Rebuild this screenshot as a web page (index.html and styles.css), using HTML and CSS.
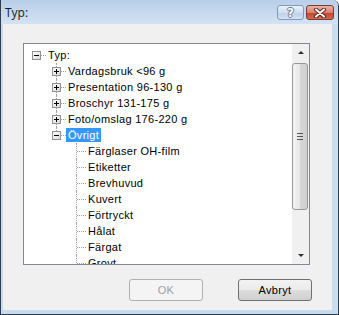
FILE: index.html
```html
<!DOCTYPE html>
<html lang="sv">
<head>
  <meta charset="UTF-8">
  <title>Typ:</title>
  <link rel="stylesheet" href="styles.css">
</head>
<body>
  <div class="window">
    <div class="titlebar">
      <span class="title">Typ:</span>
      <div class="caption-buttons">
        <span class="cap help">?</span>
        <span class="cap close">
          <svg width="14" height="10" viewBox="0 0 14 10">
            <path d="M3 1.5l8 7M11 1.5l-8 7" stroke="#5a2620" stroke-width="4" stroke-linecap="round"/>
            <path d="M3 1.5l8 7M11 1.5l-8 7" stroke="#fff" stroke-width="2" stroke-linecap="round"/>
          </svg>
        </span>
      </div>
    </div>

    <div class="client">
      <div class="treebox">
        <div class="tree">
          <div class="row"><span class="cell root"><i class="box minus"></i></span><span class="label">Typ:</span></div>
          <div class="row"><span class="cell"></span><span class="cell tee"><i class="box plus"></i></span><span class="label">Vardagsbruk &lt;96 g</span></div>
          <div class="row"><span class="cell"></span><span class="cell tee"><i class="box plus"></i></span><span class="label">Presentation 96-130 g</span></div>
          <div class="row"><span class="cell"></span><span class="cell tee"><i class="box plus"></i></span><span class="label">Broschyr 131-175 g</span></div>
          <div class="row"><span class="cell"></span><span class="cell tee"><i class="box plus"></i></span><span class="label">Foto/omslag 176-220 g</span></div>
          <div class="row"><span class="cell"></span><span class="cell ell"><i class="box minus"></i></span><span class="label selected">Övrigt</span></div>
          <div class="row"><span class="cell"></span><span class="cell"></span><span class="cell tee"></span><span class="label">Färglaser OH-film</span></div>
          <div class="row"><span class="cell"></span><span class="cell"></span><span class="cell tee"></span><span class="label">Etiketter</span></div>
          <div class="row"><span class="cell"></span><span class="cell"></span><span class="cell tee"></span><span class="label">Brevhuvud</span></div>
          <div class="row"><span class="cell"></span><span class="cell"></span><span class="cell tee"></span><span class="label">Kuvert</span></div>
          <div class="row"><span class="cell"></span><span class="cell"></span><span class="cell tee"></span><span class="label">Förtryckt</span></div>
          <div class="row"><span class="cell"></span><span class="cell"></span><span class="cell tee"></span><span class="label">Hålat</span></div>
          <div class="row"><span class="cell"></span><span class="cell"></span><span class="cell tee"></span><span class="label">Färgat</span></div>
          <div class="row"><span class="cell"></span><span class="cell"></span><span class="cell tee"></span><span class="label">Grovt</span></div>
        </div>
        <div class="scrollbar">
          <div class="arrow up"></div>
          <div class="track">
            <div class="thumb"><span class="grip"></span></div>
          </div>
          <div class="arrow down"></div>
        </div>
      </div>

      <div class="buttons">
        <button type="button" disabled>OK</button>
        <button type="button" class="default">Avbryt</button>
      </div>
    </div>
  </div>
</body>
</html>
```

FILE: styles.css
```css
body {
  margin: 0;
  padding: 0;
  background-color: #ffffff;
  font-family: "Liberation Sans", Arial, sans-serif;
  font-size: 11px;
}

.window {
  width: 339px;
  height: 315px;
  box-sizing: border-box;
  display: flex;
  flex-direction: column;
  background-color: #c9dbef;
  border-left: 1px solid #2f3d4c;
  border-right: 1px solid #2f3d4c;
  border-bottom: 1px solid #2f3d4c;
  border-top-right-radius: 6px;
  overflow: hidden;
}

.titlebar {
  height: 24px;
  flex: none;
  display: flex;
  align-items: flex-start;
  background: linear-gradient(#b8cfe9, #d3e2f3);
}

.title {
  font-family: "Open Sans", sans-serif;
  font-size: 12px;
  color: #1b1b1b;
  padding: 4px 0 0 4px;
}

.caption-buttons {
  margin-left: auto;
  margin-right: 4px;
  padding-top: 5px;
  display: flex;
  gap: 2px;
}

.cap {
  width: 27px;
  height: 15px;
  box-sizing: border-box;
  border-radius: 3px;
  display: flex;
  align-items: center;
  justify-content: center;
}

.help {
  border: 1px solid #8199ba;
  background: linear-gradient(#eaf1fa, #d0def0 50%, #bcd0ea 51%, #d3e2f3);
  font-family: "DejaVu Sans", sans-serif;
  font-weight: bold;
  font-size: 12px;
  color: #ffffff;
  text-shadow: 1px 0 #6a7b92, -1px 0 #6a7b92, 0 1px #6a7b92, 0 -1px #6a7b92;
}

.close {
  width: 28px;
  border: 1px solid #7c3a31;
  background: linear-gradient(#eab1a6, #d9826f 50%, #c5432c 51%, #d2674f);
}

.client {
  flex: 1;
  margin: 0 6px 4px 2px;
  background-color: #f0f0f0;
  padding: 19px 0 0 20px;
  display: flex;
  flex-direction: column;
}

.treebox {
  width: 287px;
  height: 222px;
  box-sizing: border-box;
  border: 1px solid #828790;
  background-color: #ffffff;
  display: flex;
  overflow: hidden;
}

.tree {
  flex: 1;
  padding: 3px 0 0 2px;
  overflow: hidden;
}

.row {
  height: 16px;
  display: flex;
  align-items: center;
}

.cell {
  width: 20px;
  height: 16px;
  flex: none;
  position: relative;
}

.tee::before,
.ell::before {
  content: "";
  position: absolute;
  left: 10px;
  top: 0;
  height: 16px;
  border-left: 1px dotted #a0a0a0;
}

.ell::before {
  height: 8px;
}

.root::after,
.tee::after,
.ell::after {
  content: "";
  position: absolute;
  left: 11px;
  top: 8px;
  width: 9px;
  border-top: 1px dotted #a0a0a0;
}

.box {
  position: absolute;
  left: 6px;
  top: 4px;
  width: 9px;
  height: 9px;
  box-sizing: border-box;
  border: 1px solid #919191;
  background: linear-gradient(135deg, #ffffff, #d9d9d9);
  z-index: 1;
}

.box::before {
  content: "";
  position: absolute;
  left: 1px;
  top: 3px;
  width: 5px;
  height: 1px;
  background-color: #000000;
}

.plus::after {
  content: "";
  position: absolute;
  left: 3px;
  top: 1px;
  width: 1px;
  height: 5px;
  background-color: #000000;
}

.label {
  padding: 0 2px;
  line-height: 14px;
  letter-spacing: 0.3px;
  color: #000000;
  white-space: nowrap;
}

.label.selected {
  background-color: #3399ff;
  color: #ffffff;
}

.scrollbar {
  width: 17px;
  flex: none;
  display: flex;
  flex-direction: column;
  background-color: #f0f0f0;
}

.arrow {
  height: 17px;
  flex: none;
  display: flex;
  align-items: center;
  justify-content: center;
}

.arrow::before {
  content: "";
  border-left: 3px solid transparent;
  border-right: 3px solid transparent;
}

.up::before {
  border-bottom: 3px solid #303030;
}

.down::before {
  border-top: 3px solid #303030;
}

.track {
  flex: 1;
  padding: 2px 1px 0 0;
}

.thumb {
  height: 147px;
  box-sizing: border-box;
  border: 1px solid #979797;
  border-radius: 3px;
  background: linear-gradient(90deg, #f4f4f4, #e6e6e6 50%, #d6d6d6 51%, #d0d0d0);
  display: flex;
  align-items: center;
  justify-content: center;
}

.grip {
  width: 6px;
  height: 5px;
  border-top: 1px solid #555555;
  border-bottom: 1px solid #555555;
  background: linear-gradient(transparent 2px, #555555 2px, #555555 3px, transparent 3px);
}

.buttons {
  display: flex;
  justify-content: flex-end;
  gap: 35px;
  margin-top: 14px;
  padding-right: 20px;
}

button {
  width: 74px;
  height: 22px;
  font-family: "Liberation Sans", Arial, sans-serif;
  font-size: 11px;
  letter-spacing: 0.3px;
  color: #000000;
  border: 1px solid #707070;
  border-radius: 3px;
  background: linear-gradient(#f2f2f2, #ebebeb 50%, #dddddd 51%, #cfcfcf);
  padding: 0;
}

button:disabled {
  color: #a0a0a0;
  border-color: #adb2b5;
  background: #f4f4f4;
}
```
